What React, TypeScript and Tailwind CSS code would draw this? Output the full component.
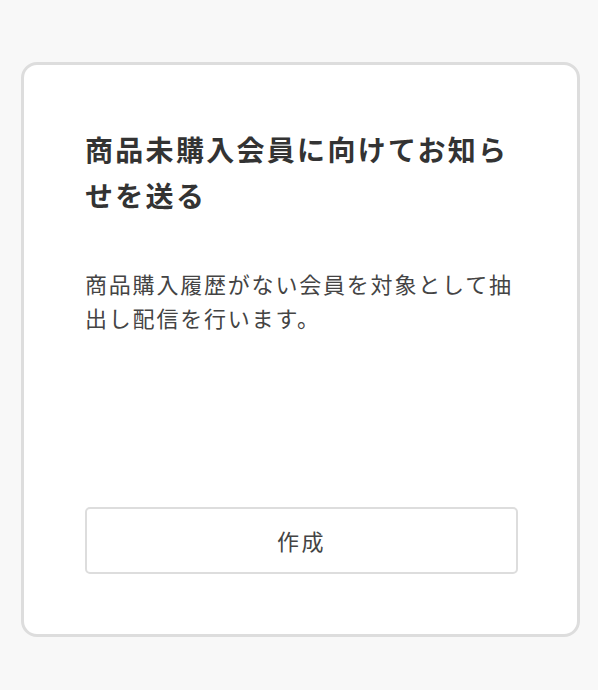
import React from 'react';

const font = { fontFamily: '"Noto Sans CJK JP", "Noto Sans", sans-serif' };

const NoticeCard: React.FC = () => {
  return (
    <div className="ml-[21px] flex h-[575px] w-[559px] flex-col rounded-[16px] border-[3px] border-[#dddddd] bg-white pt-[61px] pr-[59px] pb-[60px] pl-[61px]">
      <h2 className="text-[28px] font-bold leading-[46px] tracking-[2.3px] text-[#333333]">
        商品未購入会員に向けてお知らせを送る
      </h2>
      <p className="mt-[48px] text-[22px] leading-[34px] tracking-[1.8px] text-[#444444]">
        商品購入履歴がない会員を対象として抽出し配信を行います。
      </p>
      <button
        type="button"
        className="mt-auto h-[67px] w-full rounded-[5px] border-2 border-[#dddddd] bg-white text-[22px] tracking-[2.5px] text-[#444444]"
      >
        作成
      </button>
    </div>
  );
};

const App: React.FC = () => {
  return (
    <div className="min-h-[690px] w-full bg-[#f8f8f8] pt-[62px]" style={font}>
      <NoticeCard />
    </div>
  );
};

export default App;
